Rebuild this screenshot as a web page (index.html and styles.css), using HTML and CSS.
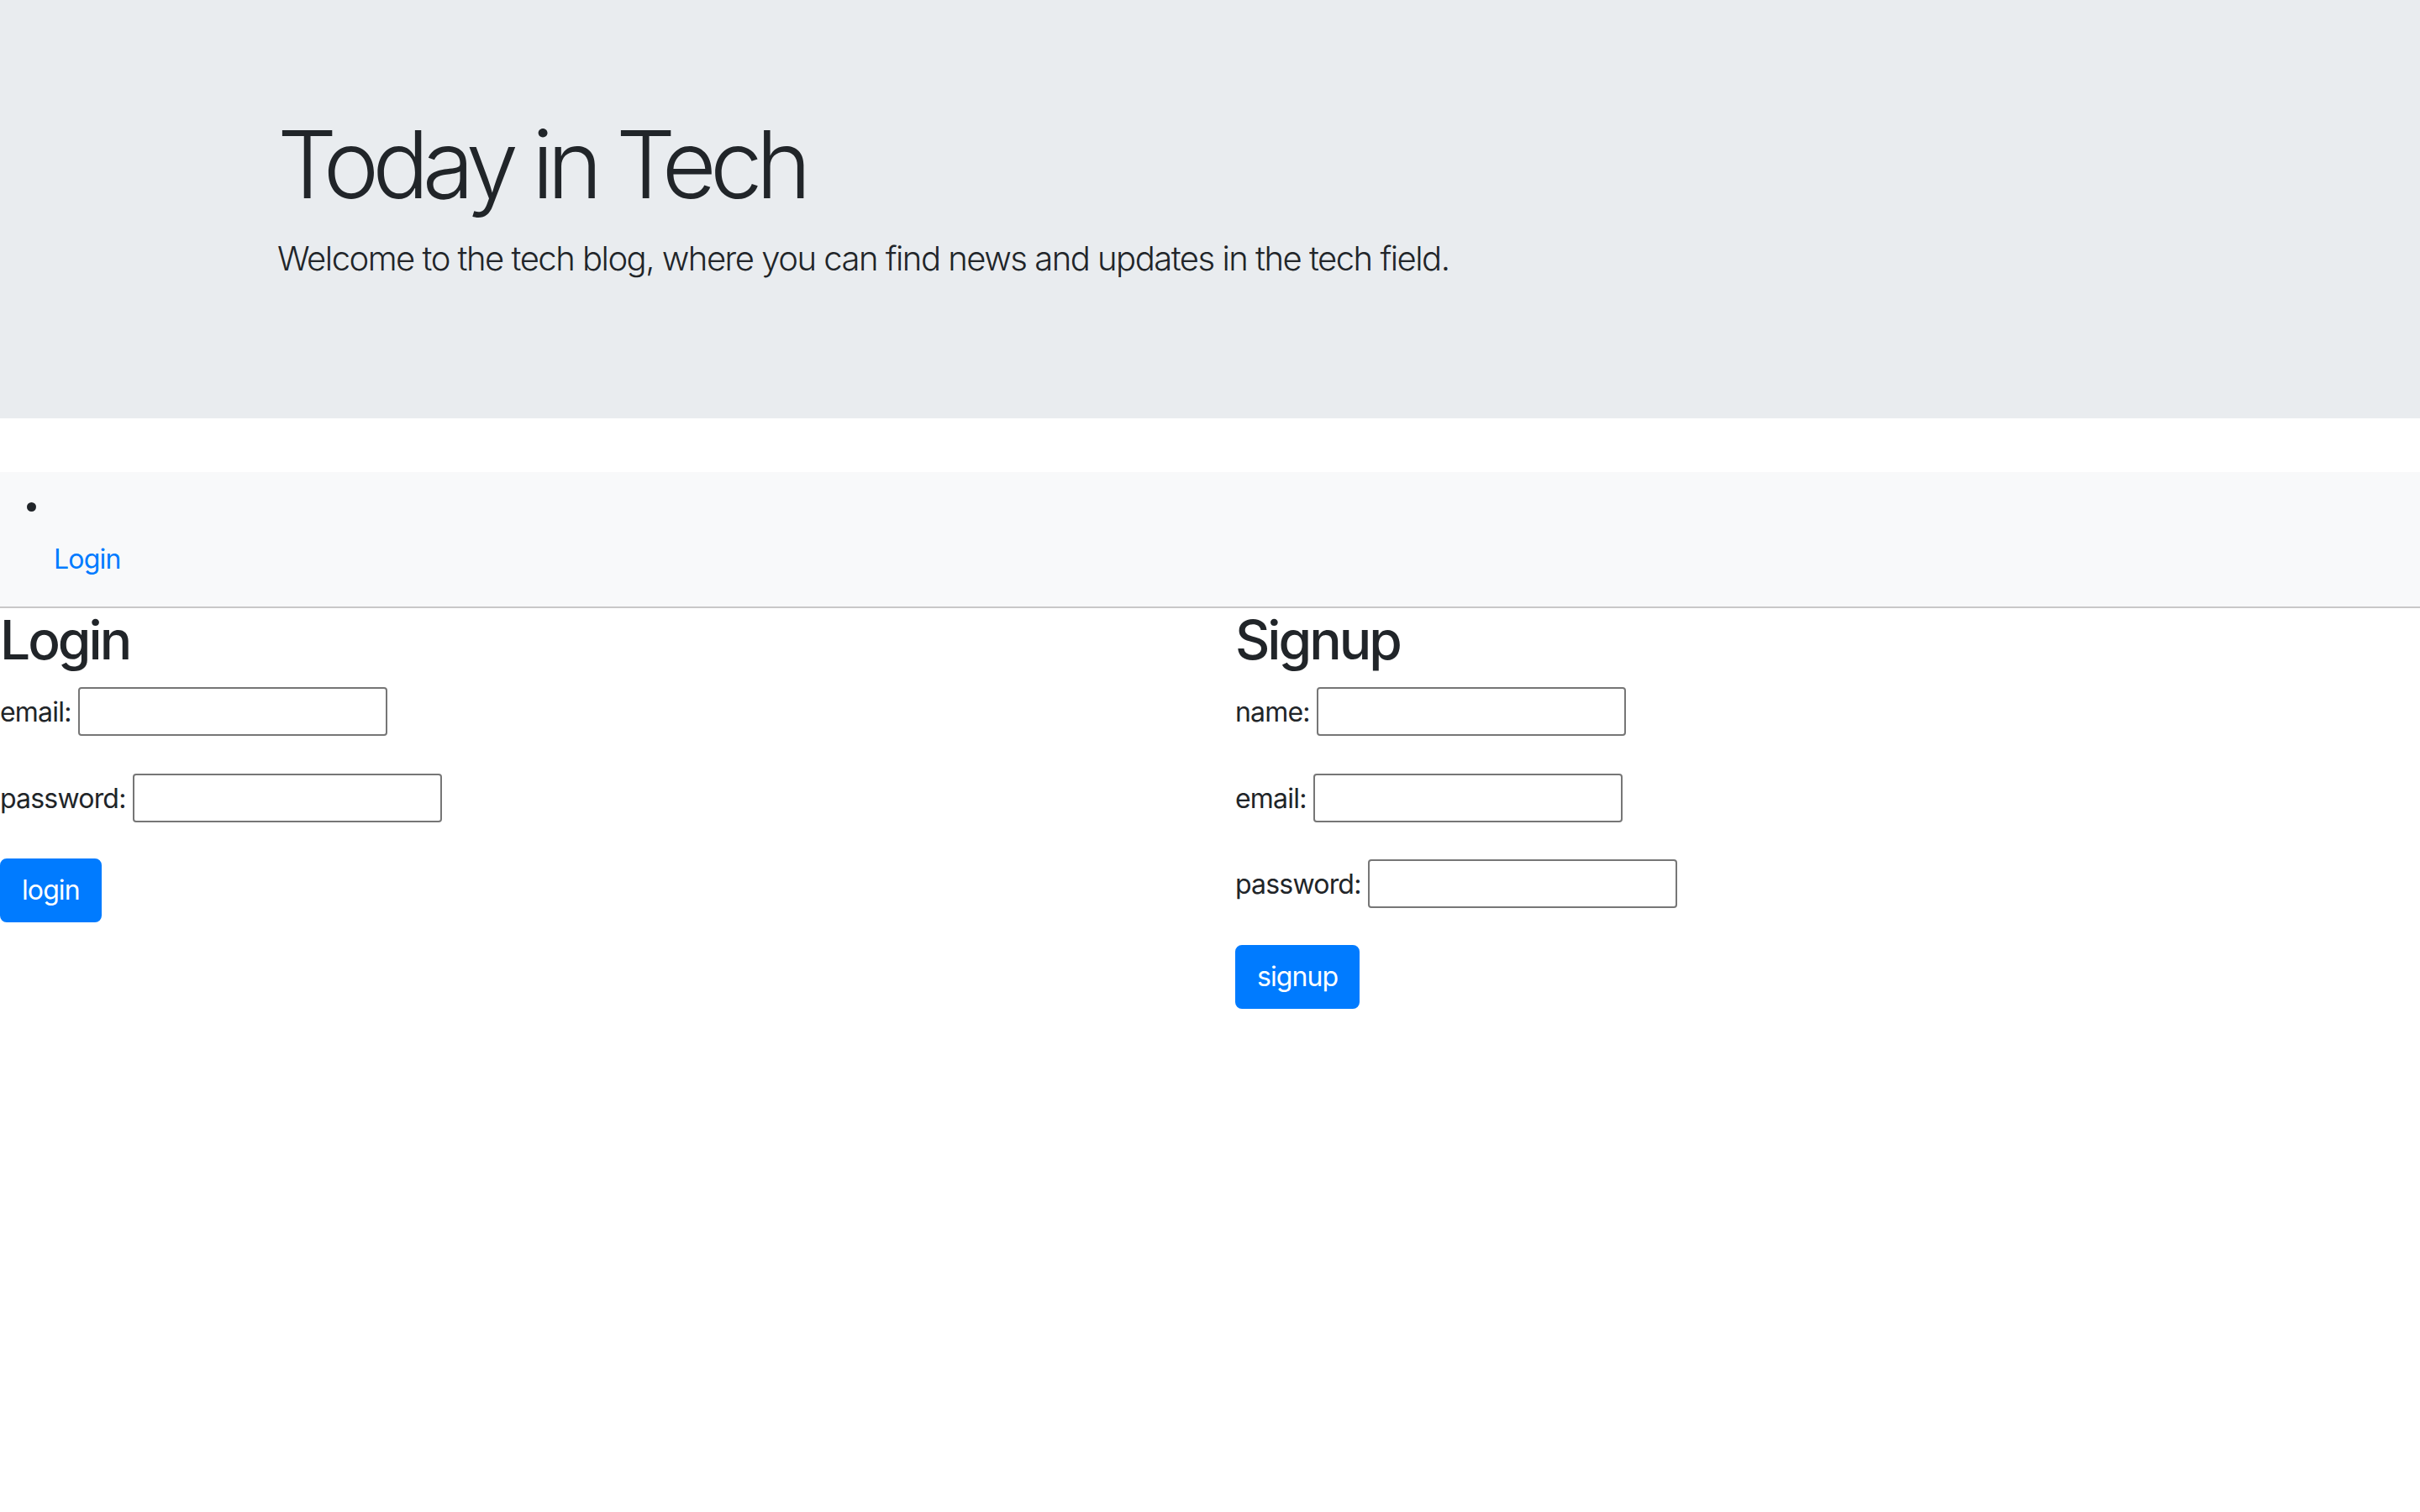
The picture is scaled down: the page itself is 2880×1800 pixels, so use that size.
FILE: index.html
```html
<!DOCTYPE html>
<html lang="en">
<head>
<meta charset="utf-8">
<title>Today in Tech</title>
<link rel="stylesheet" href="styles.css">
</head>
<body>
<header class="jumbotron">
  <div class="container">
    <h1 class="display">Today in Tech</h1>
    <p class="lead">Welcome to the tech blog, where you can find news and updates in the tech field.</p>
  </div>
</header>
<nav class="navbar">
  <ul class="nav-list">
    <li class="nav-item"><a class="nav-link" href="#">Login</a></li>
  </ul>
</nav>
<main class="forms">
  <section class="panel">
    <h2 class="panel-title">Login</h2>
    <form class="form">
      <label class="field-label" for="login-email">email:</label> <input class="field" id="login-email" type="email"><br><br>
      <label class="field-label" for="login-password">password:</label> <input class="field" id="login-password" type="password"><br><br>
      <button class="btn" type="button">login</button>
    </form>
  </section>
  <section class="panel panel-right">
    <h2 class="panel-title">Signup</h2>
    <form class="form">
      <label class="field-label" for="signup-name">name:</label> <input class="field" id="signup-name" type="text"><br><br>
      <label class="field-label" for="signup-email">email:</label> <input class="field" id="signup-email" type="email"><br><br>
      <label class="field-label" for="signup-password">password:</label> <input class="field" id="signup-password" type="password"><br><br>
      <button class="btn" type="button">signup</button>
    </form>
  </section>
</main>
</body>
</html>
```
FILE: styles.css
```css
html, body {
  margin: 0;
  padding: 0;
  background: #ffffff;
}

body {
  font-family: Inter, "Noto Sans", "Liberation Sans", sans-serif;
  font-size: 32px;
  line-height: 1.5;
  font-weight: 400;
  color: #212529;
  letter-spacing: -0.8px;
}

.jumbotron {
  background: #e9ecef;
  padding: 128px 0;
  margin: 0 0 64px;
}

.container {
  width: 2280px;
  margin: 0 auto;
  padding: 0 30px;
  box-sizing: border-box;
}

.display {
  font-size: 112px;
  font-weight: 300;
  line-height: 1.2;
  margin: 0 0 16px;
  letter-spacing: -7.8px;
}

.lead {
  font-size: 40px;
  font-weight: 300;
  line-height: 1.5;
  margin: 0 0 32px;
  letter-spacing: -1.5px;
}

.navbar {
  background: #f8f9fa;
  padding: 16px 32px;
  border-bottom: 2px solid #c8c8c8;
}

.nav-list {
  margin: 0;
  padding: 0;
  list-style: none;
}

.nav-item::before {
  content: "";
  display: block;
  width: 11px;
  height: 11px;
  border-radius: 50%;
  background: #212529;
  margin: 20px 0 17px 0;
}

.nav-link {
  display: block;
  padding: 16px 32px;
  color: #007bff;
  text-decoration: none;
}

.forms {
  display: grid;
  grid-template-columns: 1fr 1fr;
}

.panel {
  padding: 0 30px 0 0;
}

.panel-right {
  padding: 0 30px;
}

.panel-title {
  font-size: 64px;
  font-weight: 500;
  line-height: 1.2;
  margin: 0 0 16px;
  letter-spacing: -3px;
}

.form {
  margin: 0;
}

.field {
  width: 368px;
  height: 58px;
  box-sizing: border-box;
  border: 2px solid #767676;
  border-radius: 4px;
  padding: 0 4px;
  font: inherit;
  background: #ffffff;
  margin: 1px 0 -6px;
}

.btn {
  display: inline-block;
  font: inherit;
  font-weight: 400;
  line-height: 48px;
  letter-spacing: -0.9px;
  padding: 12px 24px;
  border: 2px solid #007bff;
  background: #007bff;
  color: #ffffff;
  border-radius: 8px;
  vertical-align: middle;
  margin: 0;
  cursor: pointer;
}
```
